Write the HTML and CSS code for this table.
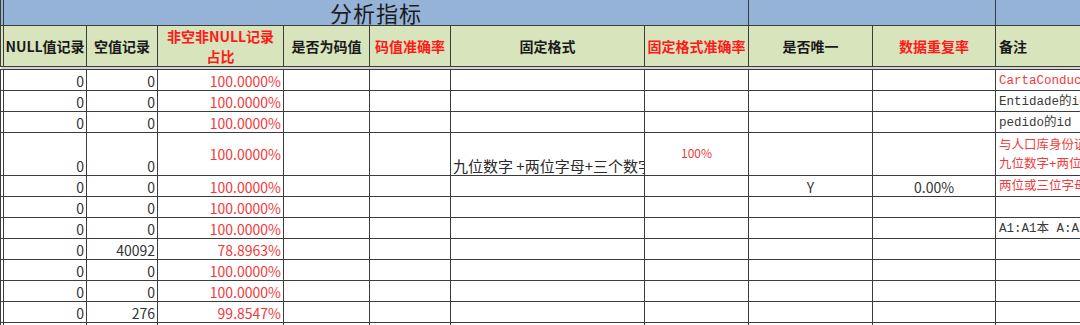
FILE: index.html
```html
<!DOCTYPE html>
<html lang="zh">
<head>
<meta charset="utf-8">
<title>分析指标</title>
<link rel="stylesheet" href="styles.css">
</head>
<body>
<div class="sheet">
<table class="grid">
<colgroup>
<col class="c0"><col class="c1"><col class="c2"><col class="c3"><col class="c4"><col class="c5"><col class="c6"><col class="c7"><col class="c8"><col class="c9"><col class="c10">
</colgroup>
<tr class="title-row">
<td class="blue"></td>
<td class="blue title" colspan="7">分析指标</td>
<td class="blue" colspan="2"></td>
<td class="blue"></td>
</tr>
<tr class="head-row">
<td class="green"></td>
<td class="green hd">NULL值记录</td>
<td class="green hd">空值记录</td>
<td class="green hd red wrap">非空非NULL记录<br>占比</td>
<td class="green hd">是否为码值</td>
<td class="green hd red">码值准确率</td>
<td class="green hd">固定格式</td>
<td class="green hd red">固定格式准确率</td>
<td class="green hd">是否唯一</td>
<td class="green hd red">数据重复率</td>
<td class="green hd left">备注</td>
</tr>
<tr class="band"><td colspan="11"></td></tr>
<tr class="row">
<td></td><td class="num">0</td><td class="num">0</td><td class="num pct">100.0000%</td><td></td><td></td><td></td><td></td><td></td><td></td><td class="note red-note">CartaConducir的id</td>
</tr>
<tr class="row">
<td></td><td class="num">0</td><td class="num">0</td><td class="num pct">100.0000%</td><td></td><td></td><td></td><td></td><td></td><td></td><td class="note">Entidade的id</td>
</tr>
<tr class="row">
<td></td><td class="num">0</td><td class="num">0</td><td class="num pct">100.0000%</td><td></td><td></td><td></td><td></td><td></td><td></td><td class="note">pedido的id</td>
</tr>
<tr class="row tall">
<td></td><td class="num">0</td><td class="num">0</td><td class="num pct mid">100.0000%</td><td></td><td></td><td class="fmt">九位数字 +两位字母+三个数字</td><td class="small-pct">100%</td><td></td><td></td><td class="note red-note multi">与人口库身份证号<br>九位数字+两位字母</td>
</tr>
<tr class="row">
<td></td><td class="num">0</td><td class="num">0</td><td class="num pct">100.0000%</td><td></td><td></td><td></td><td></td><td class="ctr">Y</td><td class="ctr">0.00%</td><td class="note red-note">两位或三位字母</td>
</tr>
<tr class="row">
<td></td><td class="num">0</td><td class="num">0</td><td class="num pct">100.0000%</td><td></td><td></td><td></td><td></td><td></td><td></td><td class="note"></td>
</tr>
<tr class="row">
<td></td><td class="num">0</td><td class="num">0</td><td class="num pct">100.0000%</td><td></td><td></td><td></td><td></td><td></td><td></td><td class="note">A1:A1本 A:A2本</td>
</tr>
<tr class="row">
<td></td><td class="num">0</td><td class="num">40092</td><td class="num pct">78.8963%</td><td></td><td></td><td></td><td></td><td></td><td></td><td class="note"></td>
</tr>
<tr class="row">
<td></td><td class="num">0</td><td class="num">0</td><td class="num pct">100.0000%</td><td></td><td></td><td></td><td></td><td></td><td></td><td class="note"></td>
</tr>
<tr class="row">
<td></td><td class="num">0</td><td class="num">0</td><td class="num pct">100.0000%</td><td></td><td></td><td></td><td></td><td></td><td></td><td class="note"></td>
</tr>
<tr class="row">
<td></td><td class="num">0</td><td class="num">276</td><td class="num pct">99.8547%</td><td></td><td></td><td></td><td></td><td></td><td></td><td class="note"></td>
</tr>
<tr class="row">
<td></td><td class="num"></td><td class="num"></td><td class="num pct"></td><td></td><td></td><td></td><td></td><td></td><td></td><td class="note"></td>
</tr>
</table>
</div>
</body>
</html>
```

FILE: styles.css
```css
html, body {
  margin: 0;
  padding: 0;
  background: #ffffff;
}

.sheet {
  width: 1080px;
  height: 325px;
  overflow: hidden;
}

.grid {
  border-collapse: collapse;
  table-layout: fixed;
  width: 1095px;
  font-family: "Noto Sans CJK SC", "Noto Sans", sans-serif;
  font-size: 14px;
  color: #333333;
}

.c0 { width: 3px; }
.c1 { width: 83px; }
.c2 { width: 71px; }
.c3 { width: 126px; }
.c4 { width: 86px; }
.c5 { width: 81px; }
.c6 { width: 194px; }
.c7 { width: 104px; }
.c8 { width: 124px; }
.c9 { width: 123px; }
.c10 { width: 100px; }

.grid td {
  border: 1px solid #3c3c3c;
  padding: 0 2px;
  overflow: hidden;
  white-space: nowrap;
  vertical-align: bottom;
  line-height: 18px;
}

.grid td:first-child {
  padding: 0;
}

.title-row td {
  border-top: none;
  height: 25px;
  padding: 0;
}

.blue {
  background: #95b3d7;
}

.grid td.title {
  text-align: center;
  vertical-align: middle;
  font-size: 22px;
  line-height: 25px;
  color: #1c1c1c;
  letter-spacing: 1px;
  overflow: visible;
}

.head-row td {
  height: 39px;
  padding: 0;
}

.green {
  background: #d8e4bc;
}

.grid td.hd {
  font-weight: bold;
  text-align: center;
  vertical-align: middle;
  color: #1a1a1a;
  line-height: 20px;
}

.grid td.hd.red {
  color: #ff1a1a;
}

.grid td.hd.left {
  text-align: left;
  padding-left: 3px;
}

.band td {
  height: 2px;
  padding: 0;
  background: #d2d2d2;
  border-left: none;
  border-right: none;
  line-height: 0;
}

.row td {
  height: 20px;
}

.row.tall td {
  height: 39px;
}

.num {
  text-align: right;
}

.pct {
  color: #f23a3a;
}

.grid td.mid {
  vertical-align: middle;
}

.ctr {
  text-align: center;
}

.grid td.fmt {
  text-align: left;
  color: #2a2a2a;
  font-size: 15px;
}

.grid td.small-pct {
  text-align: center;
  vertical-align: middle;
  color: #f23a3a;
  font-size: 12px;
  padding-bottom: 3px;
}

.grid td.note {
  font-family: "Liberation Mono", "Noto Sans CJK SC", monospace;
  font-size: 12.5px;
  color: #3a3a3a;
  text-align: left;
  padding-left: 3px;
}

.grid td.red-note {
  color: #f03c3c;
}

.grid td.multi {
  line-height: 19px;
}
```
